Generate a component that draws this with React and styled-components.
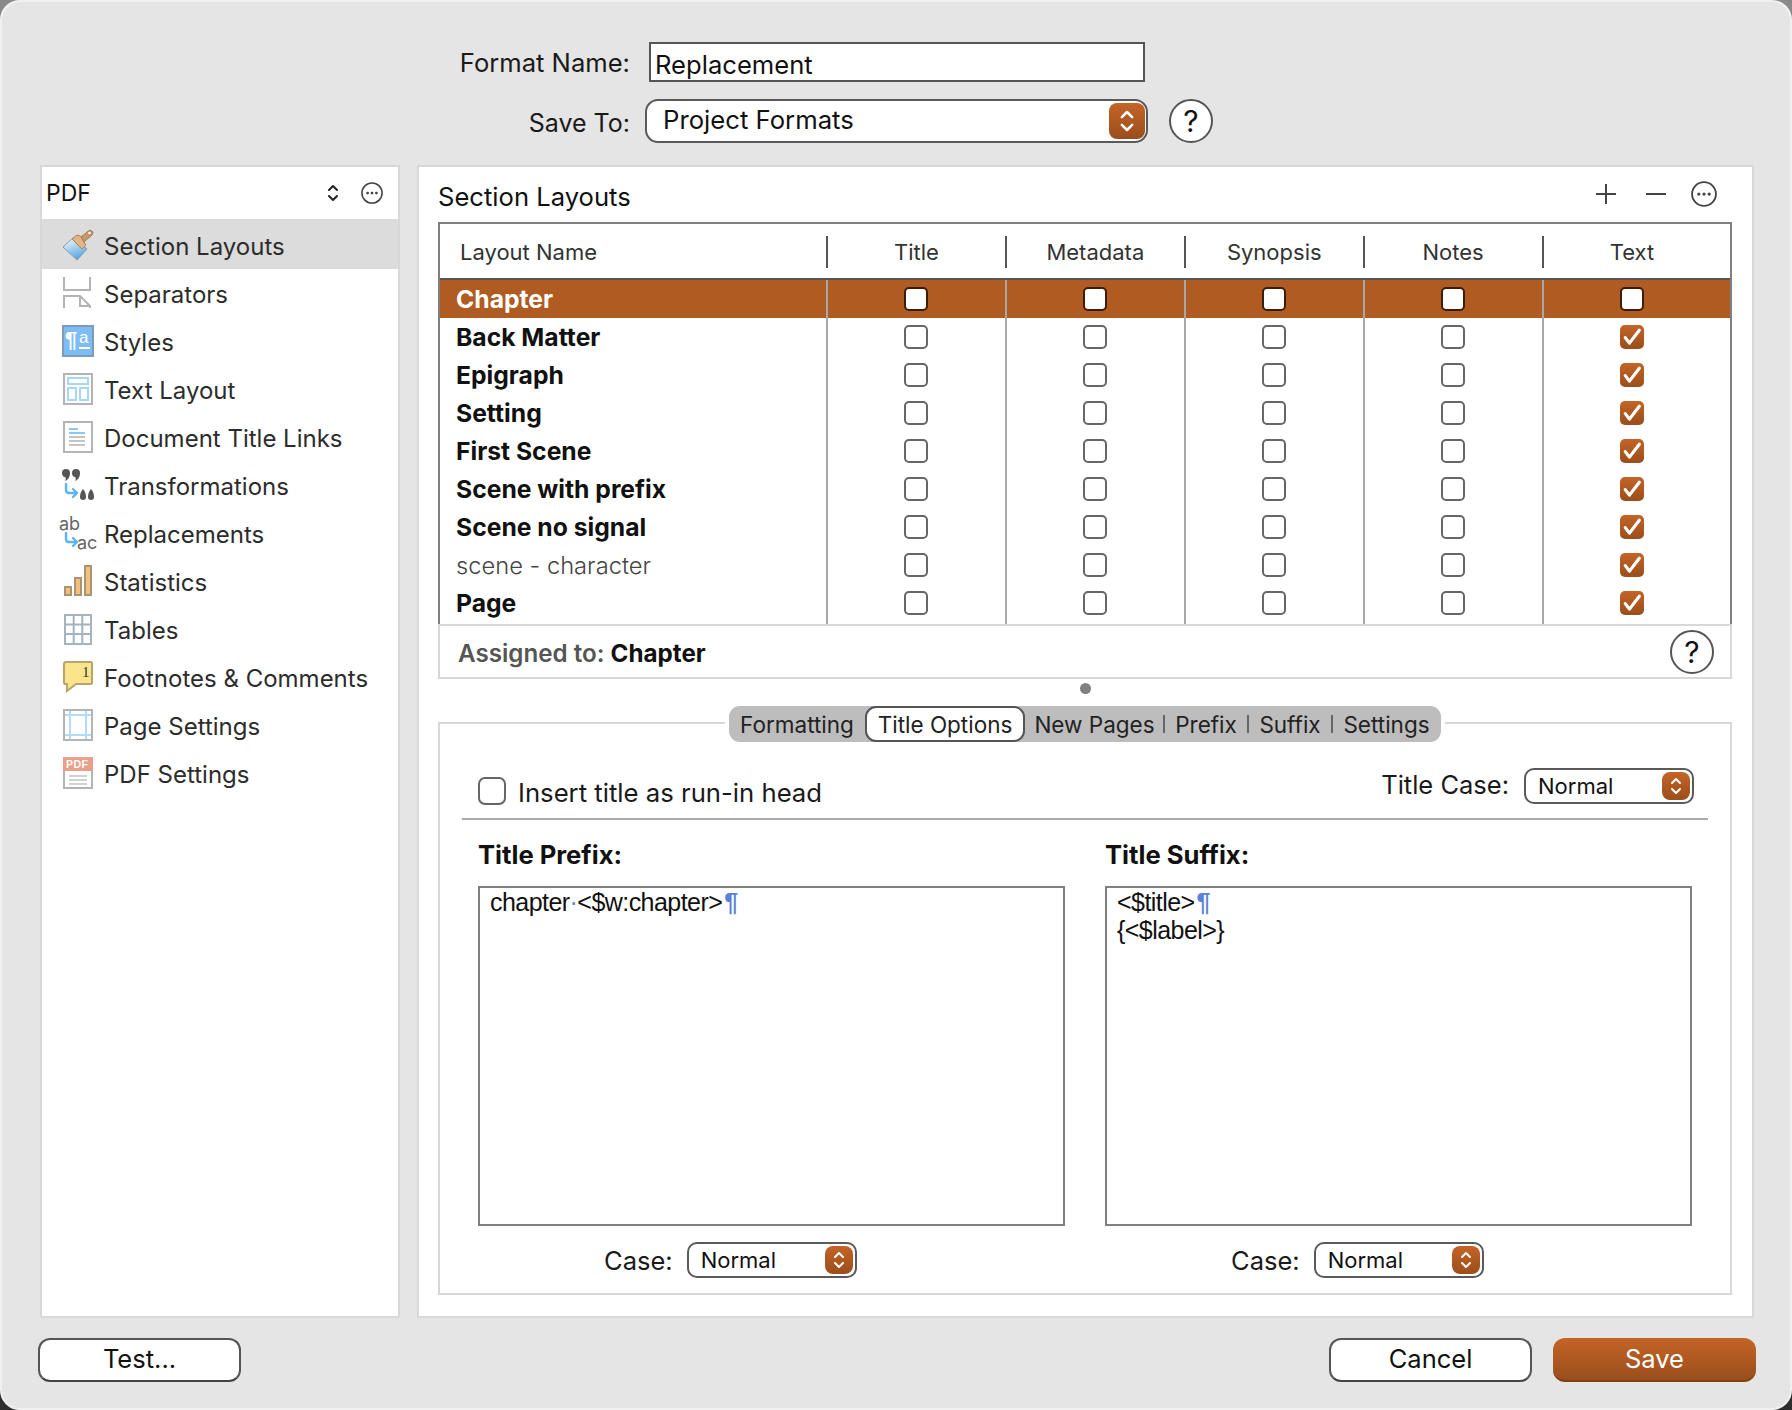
import React from 'react';
import styled, { createGlobalStyle } from 'styled-components';

const Global = createGlobalStyle`
  html, body { margin: 0; padding: 0; }
  html { background: linear-gradient(#8a8a8a, #2e2e2e); }
  * { box-sizing: border-box; }
  body { font-family: Inter, "Noto Sans", "Liberation Sans", sans-serif; color: #111; }
`;

const Window = styled.div`
  width: 1792px;
  height: 1410px;
  background: #e5e5e5;
  border-radius: 20px;
  border: 2px solid #f1f1f1;
  padding-top: 40px;
  overflow: hidden;
`;

const FormRow = styled.div`
  display: flex;
  align-items: center;
  height: ${p => p.$h}px;
  margin-top: ${p => p.$top || 0}px;
`;
const FormLabel = styled.div`
  width: 628px;
  text-align: right;
  font-size: ${p => p.$size}px;
  line-height: 30px;
  color: #1a1a1a;
  padding-top: ${p => p.$pt || 0}px;
`;
const NameInput = styled.div`
  width: 496px;
  height: 40px;
  margin-left: 19px;
  background: #fff;
  border: 2px solid #555;
  padding: 5px 4px 0;
  font-size: 25.6px;
  line-height: 32px;
`;

const SelectBox = styled.div`
  display: flex;
  align-items: center;
  justify-content: space-between;
  background: #fff;
  border: 2px solid #5a5a5a;
  border-radius: ${p => (p.$large ? 13 : 10)}px;
  width: ${p => p.$w}px;
  height: ${p => (p.$large ? 44 : 36)}px;
  margin-left: ${p => p.$ml || 0}px;
  padding: ${p => (p.$large ? '0 1px 0 16px' : '0 2px 0 12px')};
  font-size: ${p => (p.$large ? 25.7 : 22)}px;
  color: #111;
`;
const SelectText = styled.span`
  padding-bottom: ${p => (p.$large ? 4 : 0)}px;
`;
const StepperTile = styled.span`
  display: flex;
  align-items: center;
  justify-content: center;
  width: ${p => (p.$large ? 36 : 28)}px;
  height: ${p => (p.$large ? 36 : 28)}px;
  border-radius: 8px;
  background: linear-gradient(#c46427, #9a4e1b);
`;
const HelpCircle = styled.div`
  display: flex;
  align-items: center;
  justify-content: center;
  width: 44px;
  height: 44px;
  border-radius: 50%;
  background: #fff;
  border: 2px solid #555;
  font-size: 30px;
  font-weight: 400;
  color: #111;
  margin-left: ${p => p.$ml || 0}px;
`;

const Columns = styled.div`
  display: flex;
  height: 1153px;
  margin-top: ${p => p.$top}px;
  padding-left: 38px;
  gap: 17px;
`;

const Sidebar = styled.div`
  width: 360px;
  background: #fff;
  border: 2px solid #d8d8d8;
`;
const SidebarHead = styled.div`
  display: flex;
  align-items: center;
  height: 52px;
  padding-left: 4px;
  font-size: 23px;
  color: #111;
`;
const SidebarHeadName = styled.span`
  flex: 1;
`;
const SidebarHeadIcon = styled.span`
  display: flex;
  width: 24px;
  justify-content: center;
  margin-right: ${p => p.$mr}px;
`;
const SidebarList = styled.div`
  display: flex;
  flex-direction: column;
`;
const SidebarItem = styled.div`
  display: flex;
  align-items: center;
  height: ${p => (p.$active ? 50 : 48)}px;
  padding: ${p => (p.$active ? '6px' : '0')} 0 2px 20px;
  margin-bottom: ${p => (p.$active ? 2 : 0)}px;
  background: ${p => (p.$active ? '#dcdcdc' : 'transparent')};
  font-size: 24px;
  color: #2c2c2c;
  gap: 10px;
`;
const ItemIcon = styled.svg`
  width: 32px;
  height: 32px;
  flex: none;
  margin-top: -2px;
  overflow: visible;
`;

const MainPanel = styled.div`
  width: 1337px;
  background: #fff;
  border: 2px solid #d8d8d8;
  padding: 0 20px 0 19px;
`;
const PanelHead = styled.div`
  display: flex;
  align-items: center;
  height: 55px;
`;
const PanelTitle = styled.div`
  flex: 1;
  font-size: 25.6px;
  padding-top: 3px;
`;
const ToolGlyph = styled.svg`
  display: block;
  flex: none;
  margin-right: ${p => p.$mr}px;
  margin-top: -1px;
`;
const ToolMore = styled.span`
  display: flex;
  flex: none;
  margin-right: 15px;
  margin-top: -1px;
`;

const TableBox = styled.div`
  border-top: 2px solid #808080;
  border-left: 2px solid #808080;
  border-right: 2px solid #808080;
  height: 402px;
`;
const TableGrid = styled.div`
  display: grid;
  grid-template-columns: 387px repeat(5, 178.9px) 1fr;
`;
const HeadCell = styled.div`
  position: relative;
  height: 56px;
  display: flex;
  align-items: center;
  justify-content: ${p => (p.$first ? 'flex-start' : 'center')};
  padding: ${p => (p.$first ? '2px 0 0 20px' : '2px 0 0')};
  font-size: 22px;
  color: #333;
  border-bottom: 2px solid #555;
  &::before {
    content: '';
    display: ${p => (p.$first ? 'none' : 'block')};
    position: absolute;
    left: -1px;
    top: 12px;
    height: 32px;
    width: 2px;
    background: #555;
  }
`;
const BodyCell = styled.div`
  height: ${p => (p.$last ? 40 : 38)}px;
  display: flex;
  align-items: center;
  justify-content: ${p => (p.$first ? 'flex-start' : 'center')};
  padding: 0 0 ${p => (p.$last ? 2 : 0)}px ${p => (p.$first ? 16 : 0)}px;
  background: ${p => (p.$selected ? '#b05b22' : '#fff')};
  box-shadow: ${p => (p.$first ? 'none' : '-1px 0 0 0 #a8a8a8, inset 1px 0 0 0 #a8a8a8')};
  font-size: ${p => (p.$plain ? 23.7 : 24.7)}px;
  font-weight: ${p => (p.$plain ? 300 : 700)};
  color: ${p => (p.$selected ? '#fff' : p.$plain ? '#444' : '#111')};
  white-space: nowrap;
`;
const Spacer = styled.div`
  height: ${p => (p.$head ? 56 : 38)}px;
  background: ${p => (p.$selected ? '#b05b22' : '#fff')};
  border-bottom: ${p => (p.$head ? '2px solid #555' : 'none')};
`;
const Check = styled.span`
  display: flex;
  align-items: center;
  justify-content: center;
  width: ${p => p.$size || 24}px;
  height: ${p => p.$size || 24}px;
  border-radius: ${p => (p.$size ? 7 : 5)}px;
  flex: none;
  background: ${p => (p.$checked ? 'linear-gradient(#c46427, #9a4e1b)' : '#fff')};
  border: ${p => (p.$checked ? 'none' : `2px solid ${p.$dark ? '#3c1d08' : '#666'}`)};
`;

const AssignedRow = styled.div`
  display: flex;
  align-items: center;
  justify-content: space-between;
  height: 55px;
  padding: 0 16px 0 18px;
  border: 2px solid #d8d8d8;
  font-size: 24.2px;
  font-weight: 600;
  color: #555;
`;
const AssignedText = styled.span`
  padding-top: 3px;
`;
const AssignedValue = styled.span`
  color: #111;
  font-weight: 700;
`;

const Splitter = styled.div`
  display: flex;
  justify-content: center;
  height: 43px;
  padding-top: 4px;
`;
const SplitterDot = styled.span`
  width: 11px;
  height: 11px;
  border-radius: 50%;
  background: #808080;
`;

const TabFrame = styled.div`
  height: 573px;
  border: 2px solid #d8d8d8;
`;
const TabStrip = styled.div`
  display: grid;
  grid-template-columns: 136px 160px 139px 84px 84px 109px;
  width: 712px;
  height: 36px;
  margin: -18px auto 0;
  background: #bdbdbd;
  border-radius: 11px;
  box-shadow: 0 0 0 4px #fff;
`;
const TabItem = styled.div`
  position: relative;
  display: flex;
  align-items: center;
  justify-content: center;
  font-size: 22.5px;
  color: #222;
  background: ${p => (p.$selected ? '#fff' : 'transparent')};
  border: ${p => (p.$selected ? '2px solid #555' : 'none')};
  border-radius: 11px;
  &::before {
    content: '';
    display: ${p => (p.$divider ? 'block' : 'none')};
    position: absolute;
    left: -1px;
    top: 9px;
    height: 18px;
    width: 2px;
    background: #666;
  }
`;
const OptionsRow = styled.div`
  display: flex;
  justify-content: space-between;
  height: 52px;
  margin: 26px 22px 0;
  padding: 0 14px 0 16px;
  border-bottom: 2px solid #aaa;
`;
const OptionLeft = styled.div`
  display: flex;
  align-items: center;
  height: 27px;
  margin-top: 9px;
  gap: 12px;
  font-size: 25.7px;
  color: #1a1a1a;
`;
const OptionText = styled.span`
  padding-top: 3px;
`;
const OptionRight = styled.div`
  display: flex;
  align-items: flex-start;
  gap: 15px;
`;
const FieldLabel = styled.span`
  font-size: 25.5px;
  line-height: 34px;
  color: #1a1a1a;
`;
const CaseLabel = styled(FieldLabel)`
  padding-top: 2px;
`;

const EditorGrid = styled.div`
  display: grid;
  grid-template-columns: 587px 587px;
  gap: 40px;
  margin: 0 38px;
`;
const EditorTitle = styled.div`
  font-size: 25.6px;
  font-weight: 700;
  line-height: 30px;
  margin: 20px 0 16px;
`;
const EditorBox = styled.div`
  height: 340px;
  border: 2px solid #808080;
  padding: 0 10px;
  font-family: "Liberation Sans", Arial, sans-serif;
  font-size: 25px;
  line-height: 28px;
  letter-spacing: -0.55px;
  color: #111;
`;
const Pilcrow = styled.span`
  color: #5a82d8;
  font-weight: 700;
  margin-left: 2px;
`;
const SpaceDot = styled.span`
  color: #5a82d8;
`;
const CaseRow = styled.div`
  display: flex;
  align-items: center;
  gap: 14px;
  height: 36px;
  margin-top: 16px;
  padding-left: 126px;
`;

const Footer = styled.div`
  display: flex;
  justify-content: space-between;
  margin-top: 20px;
  padding: 0 34px 0 36px;
`;
const FooterRight = styled.div`
  display: flex;
  gap: 21px;
`;
const PushButton = styled.div`
  display: flex;
  align-items: center;
  justify-content: center;
  width: 203px;
  height: 44px;
  border-radius: 12px;
  font-size: 25.5px;
  padding-bottom: ${p => (p.$primary ? 2 : 4)}px;
  background: ${p => (p.$primary ? 'linear-gradient(#c46427, #9a4e1b)' : '#fff')};
  color: ${p => (p.$primary ? '#fff' : '#111')};
  border: ${p => (p.$primary ? 'none' : '2px solid #555')};
  border-bottom: ${p => (p.$primary ? '2px solid #84400f' : '2px solid #444')};
`;

const Stepper = ({ large }) => (
  <StepperTile $large={large}>
    <svg width={large ? 18 : 14} height={large ? 26 : 20} viewBox="0 0 14 20" fill="none" stroke="#fff" strokeWidth="2" strokeLinecap="round" strokeLinejoin="round">
      <path d="M3 7l4-4 4 4M3 13l4 4 4-4" />
    </svg>
  </StepperTile>
);

const Select = ({ value, w, large, ml }) => (
  <SelectBox $w={w} $large={large} $ml={ml}>
    <SelectText $large={large}>{value}</SelectText>
    <Stepper large={large} />
  </SelectBox>
);

const MoreCircle = ({ size }) => (
  <svg width={size} height={size} viewBox="0 0 24 24" fill="none">
    <circle cx="12" cy="12" r="11" stroke="#444" strokeWidth="1.7" />
    <circle cx="7.2" cy="12" r="1.5" fill="#444" />
    <circle cx="12" cy="12" r="1.5" fill="#444" />
    <circle cx="16.8" cy="12" r="1.5" fill="#444" />
  </svg>
);

const Tick = () => (
  <svg width="22" height="22" viewBox="0 0 18 18" fill="none" stroke="#fff" strokeWidth="2.6" strokeLinecap="round" strokeLinejoin="round">
    <path d="M3.5 9.5l3.4 4.5L15 3.5" />
  </svg>
);

const Arrow = ({ x = 0, y = 0 }) => (
  <path transform={`translate(${x} ${y})`} d="M3 0v6q0 3 3 3h8M10 5l4 4-4 4" fill="none" stroke="#5cb4f0" strokeWidth="2.4" strokeLinecap="round" strokeLinejoin="round" />
);

const sidebarIcons = {
  brush: (
    <>
      <defs>
        <linearGradient id="bristle" x1="0" y1="0" x2="0.4" y2="1">
          <stop offset="0.2" stopColor="#e4f1fb" />
          <stop offset="1" stopColor="#5aa9e6" />
        </linearGradient>
      </defs>
      <path d="M1 18L12 8l13 12-10 11z" fill="url(#bristle)" stroke="#8a9aa8" strokeWidth="1" />
      <path d="M10 10l5-4 3 1 2 1 1 2 1 3 2 3-4 4z" fill="#e3b488" stroke="#a98259" strokeWidth="1" />
      <path d="M19 8l6-5 3-2 3 2-1 3-8 7z" fill="#c99766" stroke="#a07a52" strokeWidth="1" />
      <circle cx="27.500" cy="4" r="1.300" fill="#fff" />
    </>
  ),
  separators: (
    <g fill="none" stroke="#b4b4b4" strokeWidth="2">
      <path d="M2 0v13h26V0" />
      <path d="M2 31V19h16l10 10v2M18 19v10h10" />
    </g>
  ),
  styles: (
    <>
      <rect x="1" y="1" width="30" height="30" fill="#7dbdf6" stroke="#7f99b6" strokeWidth="2" />
      <text x="3" y="22" fontSize="22" fontWeight="700" fill="#fff" fontFamily="Liberation Sans, sans-serif">¶</text>
      <text x="17" y="18" fontSize="17" fill="#fff" fontFamily="Liberation Sans, sans-serif">a</text>
      <path d="M17 23h11" stroke="#fff" strokeWidth="2" />
    </>
  ),
  textLayout: (
    <>
      <rect x="2" y="1" width="28" height="30" fill="#fff" stroke="#b4b4b4" strokeWidth="2" />
      <g fill="none" stroke="#a8d6f8" strokeWidth="2">
        <rect x="6" y="5" width="20" height="6" />
        <rect x="6" y="15" width="8" height="12" />
        <rect x="18" y="15" width="8" height="12" />
      </g>
    </>
  ),
  docLinks: (
    <>
      <rect x="2" y="1" width="28" height="30" fill="#fff" stroke="#b4b4b4" strokeWidth="2" />
      <path d="M7 8h9M7 12h16" stroke="#8cc8f5" strokeWidth="2" />
      <path d="M7 16h16M7 20h16M7 24h16" stroke="#c4c4c4" strokeWidth="2" />
    </>
  ),
  transforms: (
    <>
      <g fill="#555">
        <path d="M0 4a4 4 0 1 1 8 0c0 4-2 7-5 8 1-2 1-3 0-4-2 0-3-2-3-4z" />
        <path d="M10 4a4 4 0 1 1 8 0c0 4-2 7-5 8 1-2 1-3 0-4-2 0-3-2-3-4z" />
        <path d="M18 28a3 3 0 0 0 6 0c0-3-1-6-3-8-2 2-3 5-3 8z" />
        <path d="M26 28a3 3 0 0 0 6 0c0-3-1-6-3-8-2 2-3 5-3 8z" />
      </g>
      <Arrow x={1} y={15} />
    </>
  ),
  replacements: (
    <>
      <text x="-3" y="13" fontSize="18" fill="#666" fontFamily="Inter, sans-serif">ab</text>
      <text x="15" y="32" fontSize="18" fill="#666" fontFamily="Inter, sans-serif">ac</text>
      <Arrow x={1} y={16} />
    </>
  ),
  stats: (
    <g fill="#f2c07c" stroke="#ab9472" strokeWidth="2">
      <rect x="3" y="22" width="6" height="8" />
      <rect x="13" y="13" width="6" height="17" />
      <rect x="23" y="1" width="6" height="29" />
    </g>
  ),
  tables: (
    <path d="M3 2h26v29H3zM3 11.500h26M3 21h26M11.700 2v29M20.300 2v29" fill="#fff" stroke="#a3b3bf" strokeWidth="2" />
  ),
  footnotes: (
    <>
      <path d="M2 3q0-2 2-2h25q1 0 1 2v19q0 1-1 1H14l-9 7v-7H3q-1 0-1-1z" fill="#fbe58a" stroke="#b9a46e" strokeWidth="2" />
      <text x="20" y="16" fontSize="15" fontWeight="500" fill="#333" fontFamily="Liberation Serif, serif">1</text>
    </>
  ),
  pageSettings: (
    <>
      <rect x="2" y="1" width="28" height="30" fill="#fff" stroke="#b4b4b4" strokeWidth="2" />
      <path d="M3 6h26M3 26h26M8 2v28M24 2v28" stroke="#b2dbfa" strokeWidth="2" fill="none" />
    </>
  ),
  pdf: (
    <>
      <rect x="2" y="1" width="28" height="30" fill="#fff" stroke="#b4b4b4" strokeWidth="2" />
      <rect x="1" y="0" width="30" height="14" fill="#e8a08a" />
      <text x="4" y="11" fontSize="10.500" fontWeight="700" fill="#fff" fontFamily="Liberation Sans, sans-serif" letterSpacing="0.5">PDF</text>
      <path d="M7 19h18M7 23h18M7 27h18" stroke="#c4c4c4" strokeWidth="1.600" />
    </>
  ),
};

const sidebarItems = [
  ['Section Layouts', 'brush'],
  ['Separators', 'separators'],
  ['Styles', 'styles'],
  ['Text Layout', 'textLayout'],
  ['Document Title Links', 'docLinks'],
  ['Transformations', 'transforms'],
  ['Replacements', 'replacements'],
  ['Statistics', 'stats'],
  ['Tables', 'tables'],
  ['Footnotes & Comments', 'footnotes'],
  ['Page Settings', 'pageSettings'],
  ['PDF Settings', 'pdf'],
];

const layouts = [
  { name: 'Chapter', selected: true },
  { name: 'Back Matter', text: true },
  { name: 'Epigraph', text: true },
  { name: 'Setting', text: true },
  { name: 'First Scene', text: true },
  { name: 'Scene with prefix', text: true },
  { name: 'Scene no signal', text: true },
  { name: 'scene - character', text: true, plain: true },
  { name: 'Page', text: true, last: true },
];

const headers = ['Title', 'Metadata', 'Synopsis', 'Notes', 'Text'];
const tabs = ['Formatting', 'Title Options', 'New Pages', 'Prefix', 'Suffix', 'Settings'];

const App = () => (
  <Window>
    <Global />
    <FormRow $h={40}>
      <FormLabel $size={25.6} $pt={1}>Format Name:</FormLabel>
      <NameInput>Replacement</NameInput>
    </FormRow>
    <FormRow $h={46} $top={16}>
      <FormLabel $size={25} $pt={4}>Save To:</FormLabel>
      <Select value="Project Formats" w={503} large ml={15} />
      <HelpCircle $ml={21}>?</HelpCircle>
    </FormRow>

    <Columns $top={21}>
      <Sidebar>
        <SidebarHead>
          <SidebarHeadName>PDF</SidebarHeadName>
          <SidebarHeadIcon $mr={15}>
            <svg width="14" height="20" viewBox="0 0 14 20" fill="none" stroke="#222" strokeWidth="2" strokeLinecap="round" strokeLinejoin="round">
              <path d="M3 7l4-4 4 4M3 13l4 4 4-4" />
            </svg>
          </SidebarHeadIcon>
          <SidebarHeadIcon $mr={14}><MoreCircle size={22} /></SidebarHeadIcon>
        </SidebarHead>
        <SidebarList>
          {sidebarItems.map(([label, icon], i) => (
            <SidebarItem key={label} $active={i === 0}>
              <ItemIcon viewBox="0 0 32 32">{sidebarIcons[icon]}</ItemIcon>
              {label}
            </SidebarItem>
          ))}
        </SidebarList>
      </Sidebar>

      <MainPanel>
        <PanelHead>
          <PanelTitle>Section Layouts</PanelTitle>
          <ToolGlyph $mr={28} width="22" height="22" viewBox="0 0 22 22" fill="none" stroke="#444" strokeWidth="2">
            <path d="M11 1v20M1 11h20" />
          </ToolGlyph>
          <ToolGlyph $mr={24} width="22" height="22" viewBox="0 0 22 22" fill="none" stroke="#444" strokeWidth="2">
            <path d="M1 11h20" />
          </ToolGlyph>
          <ToolMore><MoreCircle size={26} /></ToolMore>
        </PanelHead>

        <TableBox>
          <TableGrid>
            <HeadCell $first>Layout Name</HeadCell>
            {headers.map(h => <HeadCell key={h}>{h}</HeadCell>)}
            <Spacer $head />
            {layouts.map(row => (
              <React.Fragment key={row.name}>
                <BodyCell $first $selected={row.selected} $plain={row.plain} $last={row.last}>{row.name}</BodyCell>
                {headers.map(h => {
                  const on = h === 'Text' && row.text;
                  return (
                    <BodyCell key={h} $selected={row.selected} $last={row.last}>
                      <Check $checked={on} $dark={row.selected}>{on && <Tick />}</Check>
                    </BodyCell>
                  );
                })}
                <Spacer $selected={row.selected} />
              </React.Fragment>
            ))}
          </TableGrid>
        </TableBox>
        <AssignedRow>
          <AssignedText>Assigned to: <AssignedValue>Chapter</AssignedValue></AssignedText>
          <HelpCircle>?</HelpCircle>
        </AssignedRow>
        <Splitter><SplitterDot /></Splitter>

        <TabFrame>
          <TabStrip>
            {tabs.map((t, i) => (
              <TabItem key={t} $selected={i === 1} $divider={i > 2}>{t}</TabItem>
            ))}
          </TabStrip>
          <OptionsRow>
            <OptionLeft>
              <Check $size={28} />
              <OptionText>Insert title as run-in head</OptionText>
            </OptionLeft>
            <OptionRight>
              <FieldLabel>Title Case:</FieldLabel>
              <Select value="Normal" w={170} />
            </OptionRight>
          </OptionsRow>
          <EditorGrid>
            <div>
              <EditorTitle>Title Prefix:</EditorTitle>
              <EditorBox>
                chapter<SpaceDot>·</SpaceDot>&lt;$w:chapter&gt;<Pilcrow>¶</Pilcrow>
              </EditorBox>
              <CaseRow>
                <CaseLabel>Case:</CaseLabel>
                <Select value="Normal" w={170} />
              </CaseRow>
            </div>
            <div>
              <EditorTitle>Title Suffix:</EditorTitle>
              <EditorBox>
                &lt;$title&gt;<Pilcrow>¶</Pilcrow>
                <br />
                {'{<$label>}'}
              </EditorBox>
              <CaseRow>
                <CaseLabel>Case:</CaseLabel>
                <Select value="Normal" w={170} />
              </CaseRow>
            </div>
          </EditorGrid>
        </TabFrame>
      </MainPanel>
    </Columns>

    <Footer>
      <PushButton>Test...</PushButton>
      <FooterRight>
        <PushButton>Cancel</PushButton>
        <PushButton $primary>Save</PushButton>
      </FooterRight>
    </Footer>
  </Window>
);

export default App;
